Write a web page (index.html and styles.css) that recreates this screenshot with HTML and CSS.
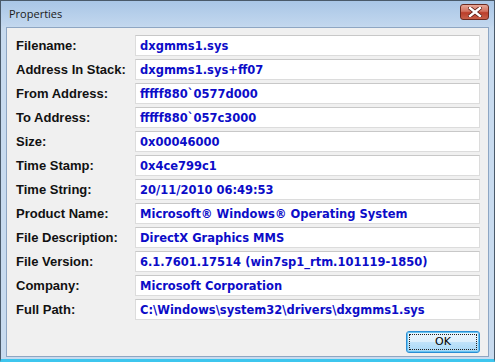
FILE: index.html
```html
<!DOCTYPE html>
<html lang="en">
<head>
    <meta charset="UTF-8">
    <title>Properties</title>
    <link rel="stylesheet" href="styles.css">
</head>
<body>
    <div class="window">
        <div class="titlebar">
            <span class="title">Properties</span>
            <div class="close-btn">
                <svg width="14" height="10" viewBox="0 0 14 10">
                    <path d="M2 1 L12 9 M12 1 L2 9" stroke="#5a1a12" stroke-width="4" stroke-linecap="square"/>
                    <path d="M2 1 L12 9 M12 1 L2 9" stroke="#fff" stroke-width="2.4" stroke-linecap="square"/>
                </svg>
            </div>
        </div>
        <div class="client">
            <div class="fields">
                <label>Filename:</label><div class="value">dxgmms1.sys</div>
                <label>Address In Stack:</label><div class="value">dxgmms1.sys+ff07</div>
                <label>From Address:</label><div class="value">fffff880`0577d000</div>
                <label>To Address:</label><div class="value">fffff880`057c3000</div>
                <label>Size:</label><div class="value">0x00046000</div>
                <label>Time Stamp:</label><div class="value">0x4ce799c1</div>
                <label>Time String:</label><div class="value">20/11/2010 06:49:53</div>
                <label>Product Name:</label><div class="value">Microsoft® Windows® Operating System</div>
                <label>File Description:</label><div class="value">DirectX Graphics MMS</div>
                <label>File Version:</label><div class="value">6.1.7601.17514 (win7sp1_rtm.101119-1850)</div>
                <label>Company:</label><div class="value">Microsoft Corporation</div>
                <label>Full Path:</label><div class="value">C:\Windows\system32\drivers\dxgmms1.sys</div>
            </div>
            <div class="actions">
                <button class="ok-btn"><span>OK</span></button>
            </div>
        </div>
    </div>
</body>
</html>
```
FILE: styles.css
```css
/* Window frame */
body {
    margin: 0;
    background: #fff;
}
.window {
    width: 495px;
    height: 362px;
    box-sizing: border-box;
    border: 1px solid #4a5a6a;
    border-bottom: 3px solid #3ec6ee;
    background: linear-gradient(to bottom, #b4cde8, #c8dbef 30px, #c8dbef);
    display: flex;
    flex-direction: column;
    font-family: "Liberation Sans", Arial, sans-serif;
}

/* Title bar */
.titlebar {
    height: 25px;
    display: flex;
    align-items: center;
    justify-content: space-between;
    padding: 0 5px 0 8px;
    background: linear-gradient(to bottom, #a9c6e6, #c2d7ee);
}
.title {
    font-family: "Open Sans", "Liberation Sans", sans-serif;
    font-size: 11px;
    color: #1a1a1a;
    margin-top: -1px;
}
.close-btn {
    width: 29px;
    height: 16px;
    margin-top: -4px;
    box-sizing: border-box;
    border: 1px solid #6b2a20;
    border-radius: 3px;
    background: linear-gradient(to bottom, #e8a898, #d2705e 45%, #bb3e2a 55%, #c8604a);
    display: flex;
    align-items: center;
    justify-content: center;
}

/* Client area */
.client {
    flex: 1;
    margin: 1px 5px 2px 5px;
    background: #f0f0f0;
    border: 1px solid #8ea6c3;
    padding: 7px 8px 0 8px;
}
.fields {
    display: grid;
    grid-template-columns: 120px 345px;
    grid-auto-rows: 21px;
    row-gap: 3px;
}
.fields label {
    font-weight: bold;
    font-size: 13px;
    color: #111;
    display: flex;
    align-items: center;
    padding-left: 1px;
}
.value {
    background: #fff;
    border: 1px solid #dcdcdc;
    border-top-color: #c8c8c8;
    box-sizing: border-box;
    font-family: "DejaVu Sans", Verdana, sans-serif;
    font-weight: bold;
    font-size: 11.5px;
    color: #0c0cc8;
    padding-left: 4px;
    display: flex;
    align-items: center;
    white-space: nowrap;
}

/* Button */
.actions {
    display: flex;
    justify-content: flex-end;
    padding: 11px 0 0 0;
    width: 465px;
}
.ok-btn {
    width: 74px;
    height: 22px;
    border: 1px solid #2a8dd4;
    border-radius: 3px;
    background: linear-gradient(to bottom, #ecf6fd, #dceffc 50%, #c0e3fa 51%, #a8d8f6);
    box-shadow: inset 0 0 0 1px #66c4f2;
    padding: 2px;
    font-family: "DejaVu Sans", sans-serif;
    font-size: 11px;
    color: #000;
}
.ok-btn span {
    display: block;
    height: 100%;
    border: 1px dotted #222;
    box-sizing: border-box;
    line-height: 14px;
}
```
